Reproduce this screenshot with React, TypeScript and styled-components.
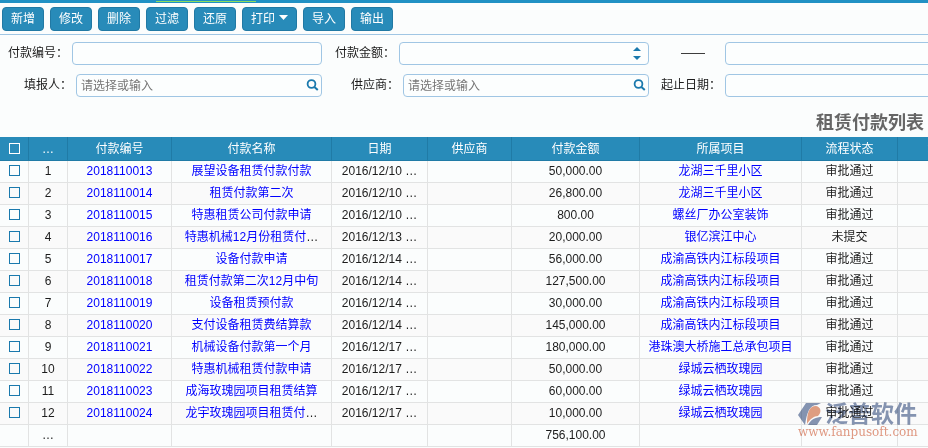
import React from "react";
import styled, { createGlobalStyle, css } from "styled-components";

const GlobalStyle = createGlobalStyle`
  * { box-sizing: border-box; }
  html, body { margin: 0; background: #fbfdfd; }
  body {
    overflow: hidden;
    font: 12px "Liberation Sans", "Noto Sans CJK SC", sans-serif;
    color: #1c1c1c;
  }
  button, input { font: inherit; }
`;

const Page = styled.main`
  position: relative;
  min-height: 100vh;
  overflow: hidden;
`;

const TopStrip = styled.div`
  height: 3px;
  padding-left: 156px;
  background: #2191c4;
`;

const ActiveTab = styled.div`
  width: 100px;
  height: 2px;
  border-bottom: 1px solid #8fdc5e;
`;

const Toolbar = styled.header`
  display: flex;
  gap: 6px;
  padding: 4px 2px 3px;
  border-bottom: 1px solid #a0c6e4;
`;

const ToolButton = styled.button`
  display: flex;
  align-items: center;
  justify-content: center;
  gap: 4px;
  min-width: 42px;
  height: 24px;
  padding: 0 8px 4px;
  border: 1px solid #2179a4;
  border-radius: 4px;
  background: #288bb9;
  color: #fff;
`;

const Filters = styled.form`
  display: grid;
  grid-template-columns: 322px 327px minmax(326px, 1fr);
  row-gap: 9px;
  padding: 7px 0 12px;
`;

const Field = styled.div`
  display: flex;
  align-items: center;
  justify-content: flex-end;
`;

const FieldLabel = styled.label<{ $gap?: number }>`
  padding: 0 ${(p) => p.$gap ?? 4}px 1px 0;
  line-height: 18px;
  white-space: nowrap;
`;

const InputBox = styled.div<{ $short?: boolean }>`
  display: flex;
  align-items: center;
  width: ${(p) => (p.$short ? 246 : 250)}px;
  height: 23px;
  padding: 0 2px 0 4px;
  border: 1px solid #a0c6e4;
  border-radius: 4px;
  background: #fcfefe;
`;

const TextInput = styled.input`
  flex: 1;
  min-width: 0;
  height: 20px;
  padding: 0;
  border: 0;
  outline: 0;
  background: transparent;
  &::placeholder { color: #777; opacity: 1; }
`;

const IconButton = styled.button`
  display: flex;
  margin: 0;
  padding: 0;
  border: 0;
  background: none;
  color: #1a79ad;
`;

const Spinner = styled.div`
  display: flex;
  flex-direction: column;
  gap: 5px;
  margin-right: 5px;
`;

const Title = styled.h1`
  margin: 0;
  padding-right: 4px;
  text-align: right;
  font-size: 18px;
  font-weight: 700;
  line-height: 28px;
  color: #666;
`;

const Grid = styled.table`
  width: 100%;
  min-width: 994px;
  table-layout: fixed;
  border-collapse: separate;
  border-spacing: 0;
  text-align: center;
`;

const Col = styled.col<{ $w?: number }>`
  ${(p) => p.$w && css`width: ${p.$w}px;`}
`;

const HeadCell = styled.th`
  height: 24px;
  padding: 0;
  border: solid #207ba6;
  border-width: 0 1px 1px 0;
  background: #288bb9;
  color: #fff;
  font-weight: 400;
  line-height: 22px;
  white-space: nowrap;
`;

const Cell = styled.td`
  height: 22px;
  padding: 0 0 1px;
  border: solid #e2e3e3;
  border-width: 0 1px 1px 0;
  line-height: 20px;
  white-space: nowrap;
  overflow: hidden;
`;

const Row = styled.tr`
  background: #fbfdfd;
  &:nth-child(even) { background: #fafafa; }
`;

const Link = styled.a`
  color: #0000ff;
  text-decoration: none;
`;

const Tick = styled.input<{ $light?: boolean }>`
  appearance: none;
  display: block;
  width: 11px;
  height: 11px;
  margin: 0 auto ${(p) => (p.$light ? 0 : 2)}px;
  border: 1px solid ${(p) => (p.$light ? "#fff" : "#1a79ad")};
  background: transparent;
`;

const Watermark = styled.div`
  position: absolute;
  right: 11px;
  bottom: 9px;
  width: 119px;
  pointer-events: none;
  mix-blend-mode: multiply;
`;

const Brand = styled.div`
  display: flex;
  align-items: center;
  gap: 2px;
  height: 23px;
  color: #8796b4;
  font-size: 23px;
  font-weight: 700;
  line-height: 23px;
  white-space: nowrap;
`;

const Site = styled.div`
  color: #e39a83;
  font: 12px/13px "DejaVu Serif", serif;
  white-space: nowrap;
`;

const Caret = ({ up = false, width = 8, height = 4 }: { up?: boolean; width?: number; height?: number }) => (
  <svg width={width} height={height} viewBox="0 0 8 4" preserveAspectRatio="none" aria-hidden="true">
    <path d={up ? "M0 4 L4 0 L8 4Z" : "M0 0 H8 L4 4Z"} fill="currentColor" />
  </svg>
);

const SearchIcon = () => (
  <svg width="13" height="13" viewBox="0 0 13 13" fill="none" stroke="currentColor" aria-hidden="true">
    <circle cx="5.5" cy="5" r="3.9" strokeWidth="1.8" />
    <path d="M8.4 7.9 L11.8 10.9" strokeWidth="2" />
  </svg>
);

const BrandIcon = () => (
  <svg width="25" height="23" viewBox="0 0 25 23" aria-hidden="true">
    <path d="M8 0 H23 L19 2 C11 2 9 10 7 22 L0 12Z" fill="#8796b4" />
    <path d="M9 21 C9 10 11 3 18 3 C23 4 24 9 20 13 C16 13 12 16 9 21Z" fill="#e3a084" />
    <path d="M10 22 C13 16 18 14 24 14 L19 22Z" fill="#8796b4" />
  </svg>
);

const buttons = ["新增", "修改", "删除", "过滤", "还原", "打印", "导入", "输出"];
const columns = ["…", "付款编号", "付款名称", "日期", "供应商", "付款金额", "所属项目", "流程状态", "填报人"];
const widths = [29, 39, 104, 160, 96, 84, 128, 162, 96];

type Payment = { name: string; cut?: boolean; date: string; amount: string; project: string; status?: string };

const payments: Payment[] = [
  { name: "展望设备租赁付款付款", date: "2016/12/10", amount: "50,000.00", project: "龙湖三千里小区" },
  { name: "租赁付款第二次", date: "2016/12/10", amount: "26,800.00", project: "龙湖三千里小区" },
  { name: "特惠租赁公司付款申请", date: "2016/12/10", amount: "800.00", project: "螺丝厂办公室装饰" },
  { name: "特惠机械12月份租赁付", cut: true, date: "2016/12/13", amount: "20,000.00", project: "银亿滨江中心", status: "未提交" },
  { name: "设备付款申请", date: "2016/12/14", amount: "56,000.00", project: "成渝高铁内江标段项目" },
  { name: "租赁付款第二次12月中旬", date: "2016/12/14", amount: "127,500.00", project: "成渝高铁内江标段项目" },
  { name: "设备租赁预付款", date: "2016/12/14", amount: "30,000.00", project: "成渝高铁内江标段项目" },
  { name: "支付设备租赁费结算款", date: "2016/12/14", amount: "145,000.00", project: "成渝高铁内江标段项目" },
  { name: "机械设备付款第一个月", date: "2016/12/17", amount: "180,000.00", project: "港珠澳大桥施工总承包项目" },
  { name: "特惠机械租赁付款申请", date: "2016/12/17", amount: "50,000.00", project: "绿城云栖玫瑰园" },
  { name: "成海玫瑰园项目租赁结算", date: "2016/12/17", amount: "60,000.00", project: "绿城云栖玫瑰园" },
  { name: "龙宇玫瑰园项目租赁付", cut: true, date: "2016/12/17", amount: "10,000.00", project: "绿城云栖玫瑰园" },
];

export default function App() {
  return (
    <Page>
      <GlobalStyle />
      <TopStrip><ActiveTab /></TopStrip>
      <Toolbar>
        {buttons.map((b) => (
          <ToolButton key={b} type="button">
            {b}
            {b === "打印" && <Caret width={9} height={5} />}
          </ToolButton>
        ))}
      </Toolbar>
      <Filters>
        <Field>
          <FieldLabel htmlFor="code">付款编号：</FieldLabel>
          <InputBox><TextInput id="code" /></InputBox>
        </Field>
        <Field>
          <FieldLabel htmlFor="amount-from">付款金额：</FieldLabel>
          <InputBox>
            <TextInput id="amount-from" />
            <Spinner>
              <IconButton type="button" aria-label="增加"><Caret up /></IconButton>
              <IconButton type="button" aria-label="减少"><Caret /></IconButton>
            </Spinner>
          </InputBox>
        </Field>
        <Field>
          <FieldLabel htmlFor="amount-to" $gap={20}>——</FieldLabel>
          <InputBox><TextInput id="amount-to" /></InputBox>
        </Field>
        <Field>
          <FieldLabel htmlFor="reporter">填报人：</FieldLabel>
          <InputBox $short>
            <TextInput id="reporter" placeholder="请选择或输入" />
            <IconButton type="button" aria-label="查找填报人"><SearchIcon /></IconButton>
          </InputBox>
        </Field>
        <Field>
          <FieldLabel htmlFor="supplier">供应商：</FieldLabel>
          <InputBox $short>
            <TextInput id="supplier" placeholder="请选择或输入" />
            <IconButton type="button" aria-label="查找供应商"><SearchIcon /></IconButton>
          </InputBox>
        </Field>
        <Field>
          <FieldLabel htmlFor="period">起止日期：</FieldLabel>
          <InputBox><TextInput id="period" /></InputBox>
        </Field>
      </Filters>
      <Title>租赁付款列表</Title>
      <Grid>
        <colgroup>
          {widths.map((w, i) => <Col key={i} $w={w} />)}
          <Col />
        </colgroup>
        <thead>
          <tr>
            <HeadCell><Tick $light type="checkbox" aria-label="全选" /></HeadCell>
            {columns.map((c) => <HeadCell key={c}>{c}</HeadCell>)}
          </tr>
        </thead>
        <tbody>
          {payments.map((p, i) => (
            <Row key={i}>
              <Cell><Tick type="checkbox" aria-label={`选择 ${i + 1}`} /></Cell>
              <Cell>{i + 1}</Cell>
              <Cell><Link href="#">{2018110013 + i}</Link></Cell>
              <Cell><Link href="#">{p.name}</Link>{p.cut && "…"}</Cell>
              <Cell>{p.date} …</Cell>
              <Cell />
              <Cell>{p.amount}</Cell>
              <Cell><Link href="#">{p.project}</Link></Cell>
              <Cell>{p.status ?? "审批通过"}</Cell>
              <Cell />
            </Row>
          ))}
          <Row>
            <Cell />
            <Cell>…</Cell>
            <Cell /><Cell /><Cell /><Cell />
            <Cell>756,100.00</Cell>
            <Cell /><Cell /><Cell />
          </Row>
        </tbody>
      </Grid>
      <Watermark>
        <Brand><BrandIcon />泛普软件</Brand>
        <Site>www.fanpusoft.com</Site>
      </Watermark>
    </Page>
  );
}
